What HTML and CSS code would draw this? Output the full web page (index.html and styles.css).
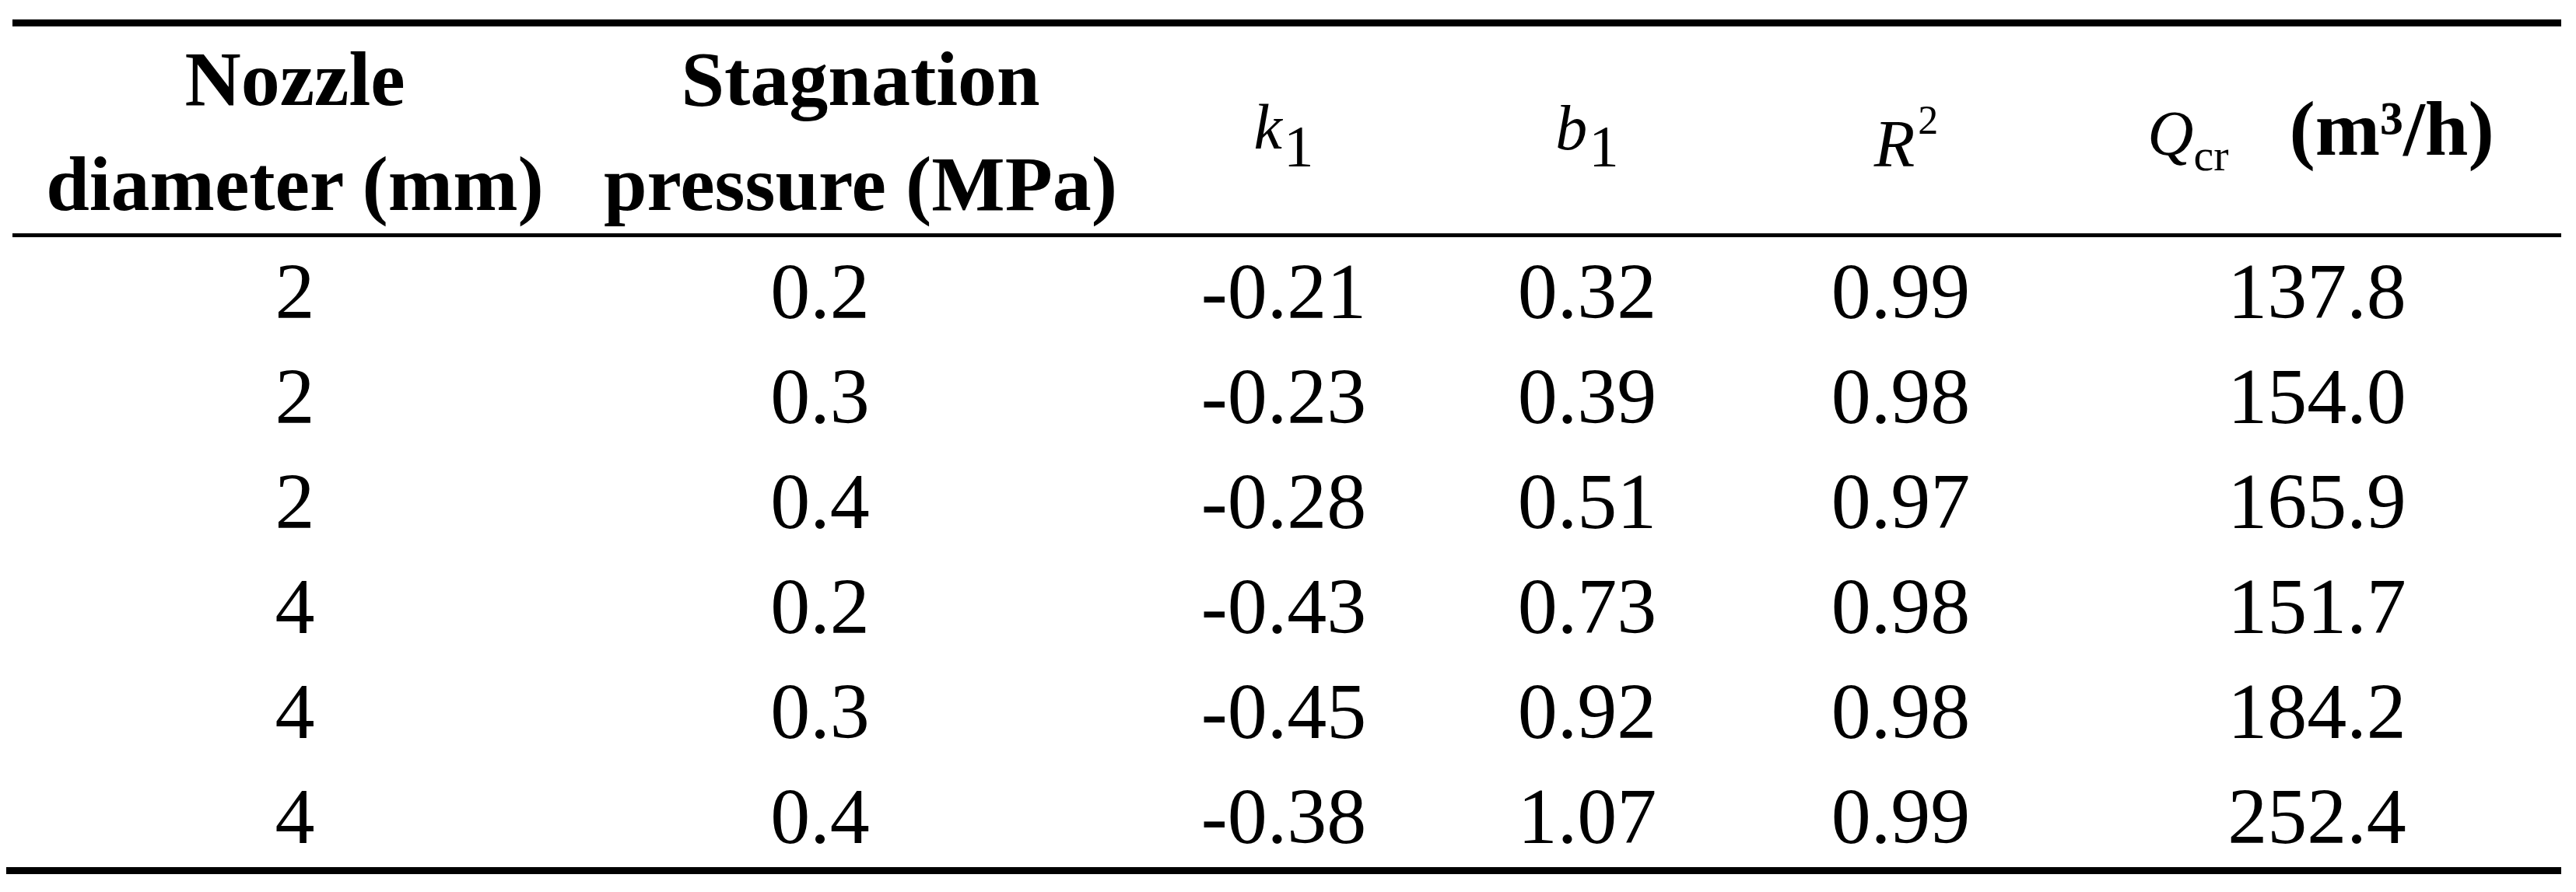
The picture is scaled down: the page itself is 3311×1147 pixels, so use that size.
FILE: index.html
```html
<!DOCTYPE html>
<html lang="en">
<head>
<meta charset="utf-8">
<title>Table</title>
<link rel="stylesheet" href="styles.css">
</head>
<body>
<div class="sheet">
  <table class="data">
    <colgroup>
      <col class="c1"><col class="c2"><col class="c3"><col class="c4"><col class="c5"><col class="c6">
    </colgroup>
    <thead>
      <tr>
        <th class="h2l"><div class="hl">Nozzle<br>diameter (mm)</div></th>
        <th class="h2l"><div class="hl">Stagnation<br>pressure (MPa)</div></th>
        <th class="h1l"><span class="mv mk"><i>k</i><sub>1</sub></span></th>
        <th class="h1l"><span class="mv mb"><i>b</i><sub>1</sub></span></th>
        <th class="h1l"><span class="mv mr"><i>R</i><sup>2</sup></span></th>
        <th class="h1l hq"><span class="mv mq"><i>Q</i><sub>cr</sub></span><span class="unit">(m³/h)</span></th>
      </tr>
    </thead>
    <tbody>
      <tr><td>2</td><td class="d2">0.2</td><td>-0.21</td><td>0.32</td><td class="d5">0.99</td><td class="d6">137.8</td></tr>
      <tr><td>2</td><td class="d2">0.3</td><td>-0.23</td><td>0.39</td><td class="d5">0.98</td><td class="d6">154.0</td></tr>
      <tr><td>2</td><td class="d2">0.4</td><td>-0.28</td><td>0.51</td><td class="d5">0.97</td><td class="d6">165.9</td></tr>
      <tr><td>4</td><td class="d2">0.2</td><td>-0.43</td><td>0.73</td><td class="d5">0.98</td><td class="d6">151.7</td></tr>
      <tr><td>4</td><td class="d2">0.3</td><td>-0.45</td><td>0.92</td><td class="d5">0.98</td><td class="d6">184.2</td></tr>
      <tr><td>4</td><td class="d2">0.4</td><td>-0.38</td><td>1.07</td><td class="d5">0.99</td><td class="d6">252.4</td></tr>
    </tbody>
  </table>
  <div class="rule-bottom"></div>
</div>
</body>
</html>
```

FILE: styles.css
```css
html, body {
  margin: 0;
  padding: 0;
  background: #ffffff;
}

body {
  width: 3311px;
  height: 1147px;
  overflow: hidden;
  color: #000000;
  font-family: "Liberation Serif", "Times New Roman", serif;
}

.sheet {
  padding-top: 25px;
}

.data {
  margin-left: 16px;
  width: 3276px;
  table-layout: fixed;
  border-collapse: collapse;
  border-top: 9px solid #000;
}

col.c1 { width: 726px; }
col.c2 { width: 728px; }
col.c3 { width: 360px; }
col.c4 { width: 420px; }
col.c5 { width: 400px; }
col.c6 { width: 642px; }

.data thead tr {
  border-bottom: 5px solid #000;
}

.data th {
  padding: 0;
  vertical-align: top;
  text-align: center;
  font-weight: bold;
  font-size: 100px;
  line-height: 135px;
  white-space: nowrap;
}

.h2l {
  padding-top: 2px;
}

.hl {
  margin-bottom: -4px;
}

.data th.h1l {
  padding-top: 65px;
  line-height: 134px;
}

.mv {
  font-weight: normal;
  line-height: 0;
}

.mv i {
  font-style: italic;
  line-height: 0;
}

.mv sub,
.mv sup {
  line-height: 0;
  font-style: normal;
}

.mk {
  font-size: 82px;
  vertical-align: 8px;
}

.mk sub {
  font-size: 77px;
  vertical-align: -23px;
  margin-left: 2px;
}

.mb {
  font-size: 82px;
  vertical-align: 7px;
}

.mb sub {
  font-size: 77px;
  vertical-align: -22px;
  margin-left: 2px;
}

.mr {
  font-size: 86px;
  vertical-align: -15px;
}

.mr sup {
  font-size: 52px;
  vertical-align: 42px;
  margin-left: 4px;
}

.data th.hq {
  padding-left: 24px;
}

.mq {
  font-size: 82px;
  margin-right: 78px;
}

.mq sub {
  font-size: 58px;
  vertical-align: -20px;
}

.unit {
  font-weight: bold;
}

.data td {
  padding: 4px 0 0;
  text-align: center;
  font-size: 102px;
  line-height: 131px;
  white-space: nowrap;
}

.data td.d2 {
  padding-right: 104px;
}

.data td.d5 {
  padding-right: 14px;
}

.data td.d6 {
  padding-left: 14px;
}

.rule-bottom {
  margin-left: 8px;
  width: 3284px;
  height: 9px;
  background: #000;
}
```
